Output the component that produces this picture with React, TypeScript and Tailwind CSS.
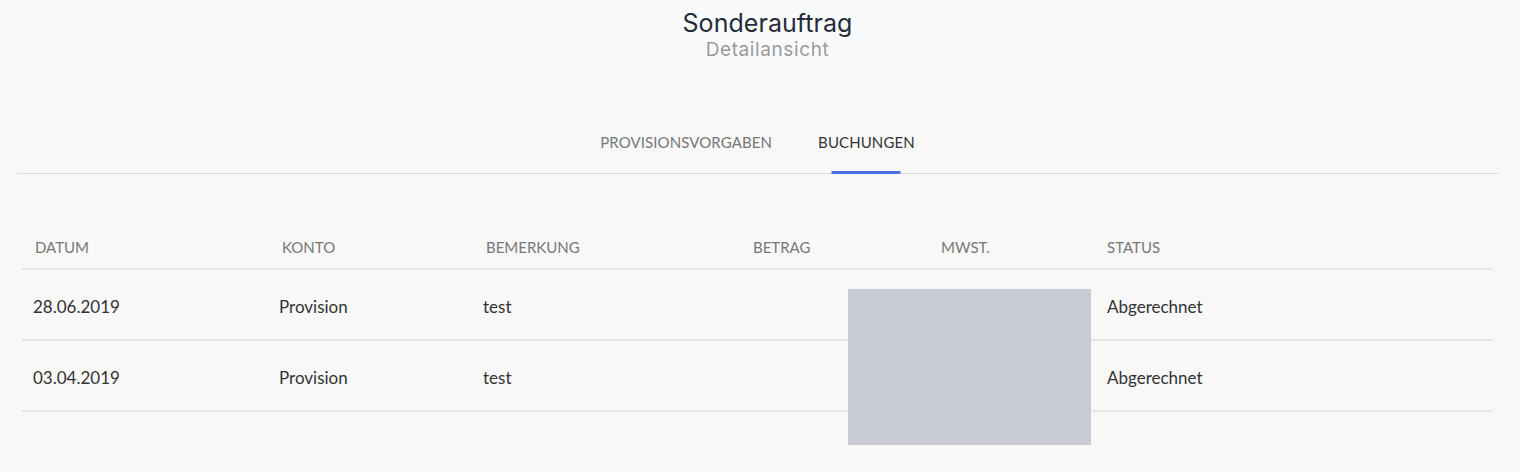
import React from "react";

const cols = "grid grid-cols-[246px_204px_270px_188px_166px_1fr] pl-[11px]";

const rows = [
  { datum: "28.06.2019", konto: "Provision", bemerkung: "test", status: "Abgerechnet" },
  { datum: "03.04.2019", konto: "Provision", bemerkung: "test", status: "Abgerechnet" },
];

export default function App() {
  return (
    <div className="w-[1520px] h-[472px] bg-[#f8f8f8] overflow-hidden" style={{ fontFamily: "Lato, 'Liberation Sans', sans-serif" }}>
      <div className="h-[92px] bg-[#f9fafb] flex flex-col items-center pt-[9px] pl-[15px]">
        <div className="text-[25px] leading-[28px] text-[#262b3a] font-['Inter',sans-serif] tracking-[0.05px]">Sonderauftrag</div>
        <div className="text-[19px] leading-[25px] text-[#9a9a9a] font-['Inter',sans-serif] tracking-[0.6px]">Detailansicht</div>
      </div>

      <div className="ml-[17px] mr-[22px] h-[82px] border-b border-[#dcdcdc]">
        <div className="flex justify-center gap-[46px] h-full">
          <div className="relative flex items-center pt-[19px] text-[15px] text-[#777] tracking-[0.1px]">
            PROVISIONSVORGABEN
          </div>
          <div className="relative flex items-center pt-[19px] text-[15px] text-[#333] tracking-[0.1px]">
            BUCHUNGEN
            <div className="absolute bottom-[-1px] left-1/2 -translate-x-1/2 w-[69px] h-[3px] bg-[#4f6fe2]" />
          </div>
        </div>
      </div>

      <div className="relative ml-[22px] mr-[27px] mt-[52px]">
        <div className={`${cols} h-[44px] items-center pt-[1px] border-b-2 border-[#e6e6e6] text-[15px] text-[#777]`}>
          <div className="pl-[2px]">DATUM</div>
          <div className="pl-[3px]">KONTO</div>
          <div className="pl-[3px]">BEMERKUNG</div>
          <div>BETRAG</div>
          <div>MWST.</div>
          <div>STATUS</div>
        </div>
        {rows.map((r, i) => (
          <div key={i} className={`${cols} h-[71px] items-center pt-[5px] border-b-2 border-[#e6e6e6] text-[17px] text-[#333]`}>
            <div>{r.datum}</div>
            <div>{r.konto}</div>
            <div>{r.bemerkung}</div>
            <div></div>
            <div></div>
            <div>{r.status}</div>
          </div>
        ))}
        <div className="absolute left-[826px] top-[63px] w-[243px] h-[156px] bg-[#c8cbd3]" />
      </div>
    </div>
  );
}
